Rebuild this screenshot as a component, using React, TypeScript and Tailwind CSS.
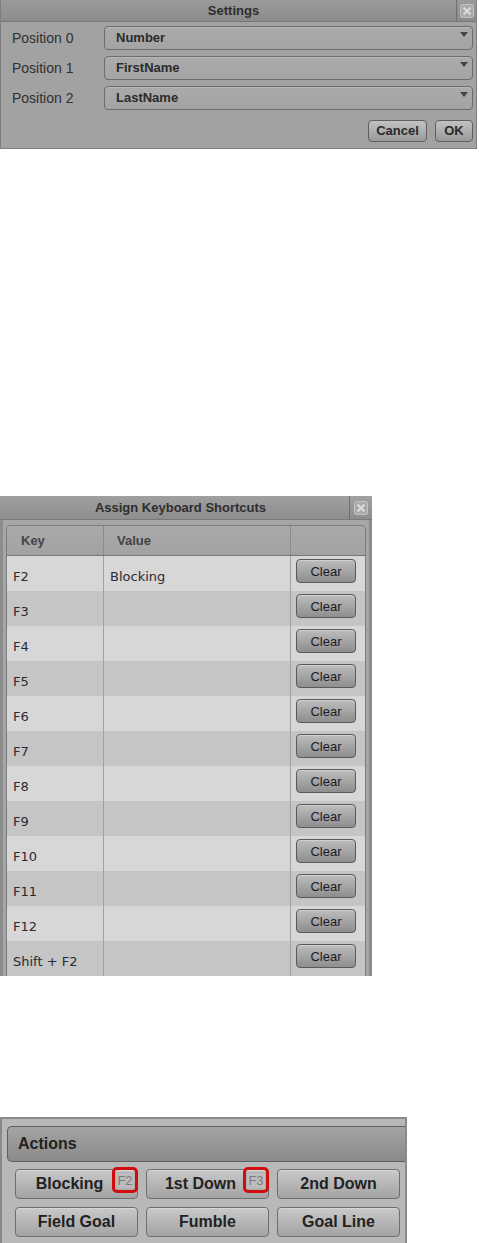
import React from "react";

const arial = { fontFamily: '"Liberation Sans", Arial, sans-serif' };
const dejavu = { fontFamily: '"DejaVu Sans", Verdana, sans-serif' };

function CloseIcon() {
  return (
    <svg width="14" height="14" viewBox="0 0 14 14">
      <rect x="0.5" y="0.5" width="13" height="13" rx="2" fill="#a9a9a9" stroke="#c4c4c4" />
      <path d="M3.5 3.5 L10.5 10.5 M10.5 3.5 L3.5 10.5" stroke="#dcdcdc" strokeWidth="2.2" />
    </svg>
  );
}

function Dropdown({ value }: { value: string }) {
  return (
    <div className="relative flex-1 h-[24px] rounded-[4px] border border-[#6c6c6c] bg-gradient-to-b from-[#aaaaaa] to-[#a4a4a4] flex items-center pl-[11px] shadow-[inset_0_1px_0_#b8b8b8]">
      <span className="text-[13px] font-bold text-[#2b2b2b]" style={arial}>{value}</span>
      <svg className="absolute right-[4px] top-[5px]" width="8" height="5" viewBox="0 0 8 5">
        <path d="M0 0 L8 0 L4 5 Z" fill="#444" />
      </svg>
    </div>
  );
}

function SmallButton({ label, w }: { label: string; w: string }) {
  return (
    <div
      className={`${w} h-[22px] rounded-[4px] border border-[#5f5f5f] bg-gradient-to-b from-[#c2c2c2] to-[#9a9a9a] flex items-center justify-center text-[13px] font-bold text-[#2a2a2a]`}
      style={arial}
    >
      {label}
    </div>
  );
}

function Settings() {
  const rows = [
    ["Position 0", "Number"],
    ["Position 1", "FirstName"],
    ["Position 2", "LastName"],
  ];
  return (
    <div className="w-[477px] h-[150px] bg-[#a2a2a2] border-l border-r border-b border-[#7e7e7e] flex flex-col">
      <div className="h-[22px] flex bg-gradient-to-b from-[#9b9b9b] to-[#8b8b8b] border-b border-[#777]">
        <div className="flex-1 flex items-center justify-center pl-[10px] text-[13px] font-bold text-[#2e2e2e]" style={arial}>
          Settings
        </div>
        <div className="w-[20px] border-l border-[#6f6f6f] flex items-center justify-center">
          <CloseIcon />
        </div>
      </div>
      <div className="flex flex-col gap-[6px] pt-[4px] pr-[3px]">
        {rows.map(([l, v]) => (
          <div key={l} className="flex items-center h-[24px]">
            <div className="w-[103px] pl-[11px] text-[14px] text-[#303030]" style={arial}>{l}</div>
            <Dropdown value={v} />
          </div>
        ))}
      </div>
      <div className="flex justify-end gap-[8px] pr-[3px] mt-[10px]">
        <SmallButton label="Cancel" w="w-[59px]" />
        <SmallButton label="OK" w="w-[38px]" />
      </div>
    </div>
  );
}

function ClearButton() {
  return (
    <div
      className="w-[60px] h-[24px] rounded-[4px] border border-[#5a5a5a] bg-gradient-to-b from-[#bdbdbd] to-[#8e8e8e] shadow-[inset_0_1px_0_#d0d0d0] flex items-start justify-center pt-[2px] text-[13px] text-[#1a1a28]"
      style={arial}
    >
      Clear
    </div>
  );
}

function Shortcuts() {
  const keys = ["F2", "F3", "F4", "F5", "F6", "F7", "F8", "F9", "F10", "F11", "F12", "Shift + F2"];
  return (
    <div className="w-[372px] bg-[#a6a6a6] border-l-[3px] border-r-[3px] border-[#8c8c8c] flex flex-col">
      <div className="h-[24px] flex bg-gradient-to-b from-[#a0a0a0] to-[#8e8e8e] border-b border-[#7a7a7a] -mx-[3px]">
        <div className="flex-1 flex items-center justify-center pl-[12px] text-[13px] font-bold text-[#2e2e2e]" style={arial}>
          Assign Keyboard Shortcuts
        </div>
        <div className="w-[23px] border-l border-[#6f6f6f] flex items-center justify-center">
          <CloseIcon />
        </div>
      </div>
      <div className="mt-[5px] ml-[3px] mr-[3px] rounded-t-[5px] border-l border-r border-t border-[#7c7c7c] overflow-hidden">
        <div className="h-[30px] flex bg-gradient-to-b from-[#aaaaaa] to-[#a2a2a2] border-b border-[#777]">
          <div className="w-[97px] border-r border-[#8c8c8c] flex items-center pl-[14px] text-[13px] font-bold text-[#444]" style={arial}>Key</div>
          <div className="w-[187px] border-r border-[#8c8c8c] flex items-center pl-[13px] text-[13px] font-bold text-[#444]" style={arial}>Value</div>
          <div className="flex-1" />
        </div>
        {keys.map((k, i) => (
          <div key={k} className={`h-[35px] flex ${i % 2 === 0 ? "bg-[#d7d7d7]" : "bg-[#c5c5c5]"}`}>
            <div className="w-[97px] border-r border-[#a2a2a2] flex items-center pl-[6px] pt-[6px] text-[13px] text-[#2a2a33]" style={dejavu}>{k}</div>
            <div className="w-[187px] border-r border-[#a2a2a2] flex items-center pl-[6px] pt-[6px] text-[13px] text-[#2a2a33]" style={dejavu}>
              {i === 0 ? "Blocking" : ""}
            </div>
            <div className="flex-1 pl-[5px] pt-[3px]">
              <ClearButton />
            </div>
          </div>
        ))}
      </div>
    </div>
  );
}

function ActionButton({ label, badge }: { label: string; badge?: string }) {
  return (
    <div
      className={`relative w-[123px] h-[30px] rounded-[4px] border border-[#6e6e6e] bg-gradient-to-b from-[#c9c9c9] to-[#a3a3a3] shadow-[inset_0_1px_0_#d6d6d6] flex items-center justify-center text-[16px] font-bold text-[#222] ${badge ? "pr-[14px]" : ""}`}
      style={arial}
    >
      {label}
      {badge && (
        <div className="absolute right-[-1px] top-[-3px] w-[26px] h-[26px] rounded-[5px] border-[3px] border-[#d00c0c] flex items-center justify-center">
          <span className="px-[1px] leading-[15px] text-[13px] font-normal text-[#7c7c7c] border border-[#b0b0b0] bg-[#bcbcbc]" style={arial}>
            {badge}
          </span>
        </div>
      )}
    </div>
  );
}

function Actions() {
  return (
    <div className="w-[407px] h-[126px] bg-[#b8b8b8] border-t-2 border-l-2 border-r-2 border-[#8a8a8a] pt-[7px] pl-[5px]">
      <div className="h-[36px] rounded-l-[5px] border-t border-l border-b border-[#5f5f5f] bg-gradient-to-b from-[#a4a4a4] to-[#8a8a8a] flex items-center pl-[10px] text-[16px] font-bold text-[#222]" style={arial}>
        Actions
      </div>
      <div className="grid grid-cols-[123px_123px_123px] gap-x-[8px] gap-y-[8px] mt-[7px] pl-[8px]">
        <ActionButton label="Blocking" badge="F2" />
        <ActionButton label="1st Down" badge="F3" />
        <ActionButton label="2nd Down" />
        <ActionButton label="Field Goal" />
        <ActionButton label="Fumble" />
        <ActionButton label="Goal Line" />
      </div>
    </div>
  );
}

export default function App() {
  return (
    <div className="w-[479px] h-[1243px] bg-white overflow-hidden flex flex-col">
      <Settings />
      <div className="mt-[347px]">
        <Shortcuts />
      </div>
      <div className="mt-[141px]">
        <Actions />
      </div>
    </div>
  );
}
